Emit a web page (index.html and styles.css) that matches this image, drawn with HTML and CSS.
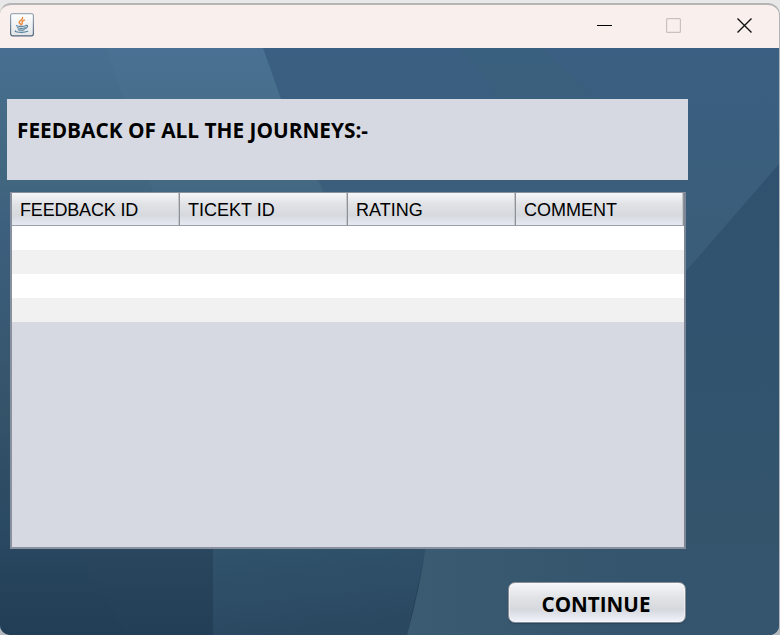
FILE: index.html
```html
<!DOCTYPE html>
<html lang="en">
<head>
<meta charset="utf-8">
<title>Feedback</title>
<link rel="stylesheet" href="styles.css">
</head>
<body>
<div class="window">
  <header class="titlebar">
    <svg class="app-icon" width="24" height="24" viewBox="0 0 24 24">
      <defs><linearGradient id="ib" x1="0" y1="0" x2="0" y2="1"><stop offset="0" stop-color="#9eabb8"/><stop offset="1" stop-color="#51687f"/></linearGradient>
      <linearGradient id="ig" x1="0" y1="0" x2="0" y2="1"><stop offset="0" stop-color="#fff"/><stop offset="1" stop-color="#e2e5e8"/></linearGradient></defs>
      <rect x=".6" y=".6" width="22.8" height="22.2" rx="2" fill="url(#ig)" stroke="url(#ib)" stroke-width="1.2"/>
      <g fill="none" stroke-linecap="round">
        <path d="M12.6 4.500c1 2-4 3-3.400 5 .2 1 1.500 1.200 1.600 2.200M14.500 7.200c-2 .6-2.800 1.300-2.300 2.400.4.900.1 1.400-.6 1.900" stroke="#e98a3c" stroke-width="1.400"/>
        <path d="M6.500 12.700c2 .8 7 .8 9.300 0M7.500 14.700c2 .7 5.500.7 7.500 0M8.400 16.700c1.700.6 4 .6 5.800 0M16 12.400c2.300-.5 2 2.300-.8 3.200M5.500 18c-2 1 8 2.200 12.200.3" stroke="#55809c" stroke-width="1.200"/>
      </g>
    </svg>
    <svg class="controls" width="156" height="20" viewBox="0 0 156 20">
      <path d="M0 9.500h15" stroke="#000" fill="none"/>
      <rect x="69.600" y="2.600" width="13.800" height="13.800" rx="1" fill="none" stroke="#c7c1bf" stroke-width="1.200"/>
      <path d="M140.500 2.500l14 14M154.500 2.500l-14 14" stroke="#111" stroke-width="1.400" fill="none"/>
    </svg>
  </header>
  <main class="content">
    <svg class="backdrop" width="779" height="587" viewBox="0 48 779 587" preserveAspectRatio="none">
      <defs>
        <linearGradient id="base" x1="0" y1="0" x2="0" y2="1"><stop offset="0" stop-color="#3a5f82"/><stop offset=".3" stop-color="#3a5e7a"/><stop offset="1" stop-color="#35546c"/></linearGradient>
        <linearGradient id="left" x1="0" y1="0" x2="0" y2="1"><stop offset="0" stop-color="#486f91"/><stop offset=".23" stop-color="#41667f"/><stop offset=".3" stop-color="#3d607f"/><stop offset=".62" stop-color="#355369"/><stop offset=".8" stop-color="#2b4a63"/><stop offset="1" stop-color="#223d56"/></linearGradient>
        <linearGradient id="right" x1="0" y1="0" x2="0" y2="1"><stop offset="0" stop-color="#305270"/><stop offset="1" stop-color="#35556b"/></linearGradient>
        <linearGradient id="low" x1="0" y1="0" x2="0" y2="1"><stop offset="0" stop-color="#2a4760"/><stop offset="1" stop-color="#233e57"/></linearGradient>
        <linearGradient id="mid" x1="0" y1="0" x2=".25" y2="1"><stop offset="0" stop-color="#31536c"/><stop offset="1" stop-color="#2b4861"/></linearGradient>
        <linearGradient id="slope" x1="0" y1="0" x2="1" y2="0"><stop offset="0" stop-color="#3b5b72"/><stop offset=".6" stop-color="#35556e"/></linearGradient>
      </defs>
      <path d="M0 48H779V635H0z" fill="url(#base)"/>
      <path d="M0 48H263L281 99L324 192L480 635H0z" fill="url(#left)"/>
      <path d="M106 48H263L281 99L322 192H153L124 99z" fill="#608caa" opacity=".1"/>
      <path d="M779 164V635H508L686 271z" fill="url(#right)"/>
      <path d="M75 545H213V635H127z" fill="url(#low)"/>
      <path d="M213 545H427L407 635H213z" fill="url(#mid)"/>
      <path d="M426 545H779V635H407Q420 588 426 545z" fill="url(#slope)"/>
      <path d="M460 48H540L600 99H500z" fill="#3b6278" opacity=".25"/>
    </svg>
    <section class="heading"><h1>FEEDBACK OF ALL THE JOURNEYS:-</h1></section>
    <section class="table-pane">
      <table>
        <thead><tr><th>FEEDBACK ID</th><th>TICEKT ID</th><th>RATING</th><th>COMMENT</th></tr></thead>
        <tbody>
          <tr><td colspan="4"></td></tr>
          <tr><td colspan="4"></td></tr>
          <tr><td colspan="4"></td></tr>
          <tr><td colspan="4"></td></tr>
        </tbody>
      </table>
    </section>
    <button class="continue">CONTINUE</button>
  </main>
</div>
</body>
</html>
```
FILE: styles.css
```css
* { box-sizing: border-box; }
body {
  margin: 0;
  padding-top: 3px;
  height: 635px;
  overflow: hidden;
  background: linear-gradient(#e8e8e8 0, #e8e8e8 20px, #b5b8bd 40px);
}
.window {
  width: 780px;
  height: 632px;
  border-top: 2px solid #b5b5b5;
  border-right: 1px solid #b0b3b7;
  border-radius: 11px 12px 10px 10px;
  overflow: hidden;
  background: #f9f0ed;
}
.titlebar {
  height: 43px;
  display: flex;
  justify-content: space-between;
  align-items: flex-start;
  padding: 8px 26px 0 10px;
}
.controls { margin-top: 3px; }
.content {
  position: relative;
  height: 587px;
  padding: 51px 0 0 7px;
  display: flex;
  flex-direction: column;
}
.backdrop { position: absolute; left: 0; top: 0; }
.heading {
  position: relative;
  width: 681px;
  height: 81px;
  padding: 17px 10px;
  background: #d6d9e1;
}
h1 {
  margin: 0;
  font: bold 20.8px/29px "Open Sans", "Noto Sans", sans-serif;
  color: #000;
  white-space: nowrap;
}
.table-pane {
  position: relative;
  width: 676px;
  height: 357px;
  margin: 12px 0 0 3px;
  border: 2px solid #88919d;
  border-top-width: 1px;
  border-right-color: #7c8695;
  background: #d6d9e1;
}
table {
  width: 672px;
  border-collapse: separate;
  border-spacing: 0;
  table-layout: fixed;
}
th {
  height: 33px;
  padding: 2px 0 0 8px;
  text-align: left;
  font: 18px/20px "Liberation Sans", Arial, sans-serif;
  color: #000;
  border-right: 1px solid #8d9298;
  border-bottom: 1px solid #9a9fa9;
  background: linear-gradient(#f6f6f8, #e0e2e5 35%, #d6d9de 70%, #e6e9f2);
  box-shadow: inset -1px 0 #c4c7cb;
}
th:first-child { letter-spacing: -.18px; }
td { height: 24px; padding: 0; background: #fff; }
tbody tr:nth-child(even) td { background: #f1f1f1; }
.continue {
  position: relative;
  width: 178px;
  height: 41px;
  margin: 33px 0 0 501px;
  padding: 3px 2px 0 0;
  border: 1px solid #858c95;
  border-radius: 7px;
  background: linear-gradient(#f7f7f9, #e2e4e7 35%, #d5d8dd 68%, #f2f4fd);
  box-shadow: 0 1px 1px #233e57aa, inset 0 0 0 1px #ffffff66;
  font: bold 20.6px/27px "Open Sans", "Noto Sans", sans-serif;
  color: #000;
}
```
